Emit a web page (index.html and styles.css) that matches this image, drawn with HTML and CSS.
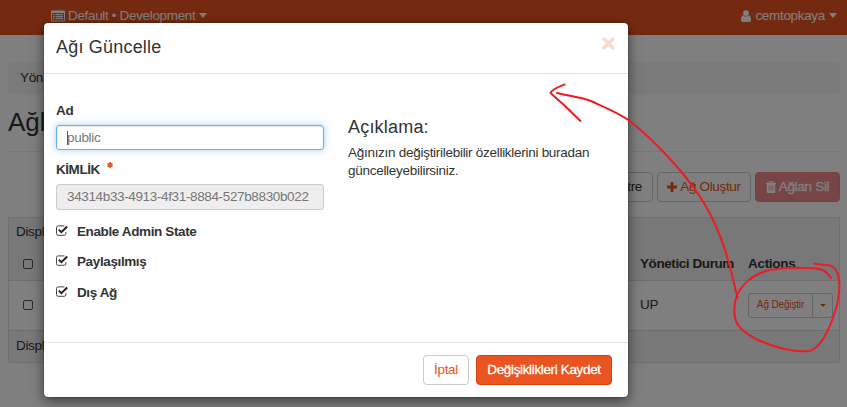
FILE: index.html
```html
<!DOCTYPE html>
<html lang="tr">
<head>
<meta charset="utf-8">
<title>Ağlar</title>
<link rel="stylesheet" href="styles.css">
</head>
<body>
<nav class="navbar">
  <div class="nav-item">
    <svg class="list-icon" width="14" height="12" viewBox="0 0 14 12"><path fill="currentColor" fill-rule="evenodd" d="M1 .5h12a1 1 0 0 1 1 1v9a1 1 0 0 1-1 1H1a1 1 0 0 1-1-1v-9a1 1 0 0 1 1-1zM1 3v7.500h12V3zM2 4h1.500v1.200H2zm2.500 0H12v1.200H4.500zM2 6h1.500v1.200H2zm2.500 0H12v1.200H4.500zM2 8h1.500v1.200H2zm2.500 0H12v1.200H4.500z"/></svg>
    <span class="project">Default • Development</span><i class="caret"></i>
  </div>
  <div class="nav-item">
    <svg class="user-icon" width="10" height="12" viewBox="0 0 10 12"><circle cx="5" cy="3.100" r="2.900" fill="currentColor"/><path fill="currentColor" d="M2.200 5.300C.6 5.800 0 7.500 0 9.700 0 11 .8 12 2 12h6c1.200 0 2-1 2-2.300 0-2.200-.6-3.900-2.200-4.400a3.800 3.800 0 0 1-5.600 0z"/></svg>
    <span class="username">cemtopkaya</span><i class="caret"></i>
  </div>
</nav>
<main class="page">
  <div class="breadcrumb">Yön</div>
  <h1>Ağl</h1>
  <div class="toolbar">
    <button class="btn filter">Filtre</button>
    <button class="btn create"><svg width="10" height="10" viewBox="0 0 10 10"><path fill="currentColor" d="M3.600 0h2.800v3.600H10v2.800H6.400V10H3.600V6.400H0V3.600h3.600z"/></svg><span>Ağ Oluştur</span></button>
    <button class="btn delete"><svg width="10" height="12" viewBox="0 0 10 12"><path fill="none" stroke="currentColor" d="M3.300 2V.6h3.400V2"/><path fill="currentColor" fill-rule="evenodd" d="M0 1.700h10v1.300H9.200v7.800Q9.200 12 8.200 12H1.800Q.8 12 .8 10.800V3H0zM2.800 4.500v5.200h.6V4.500zm1.900 0v5.200h.6V4.500zm1.900 0v5.200h.6V4.500z"/></svg><span>Ağları Sil</span></button>
  </div>
  <section class="table">
    <div class="caption">Displ</div>
    <div class="row head"><i class="box"></i><span class="col-state">Yönetici Durum</span><span class="col-actions">Actions</span></div>
    <div class="row data"><i class="box"></i><span class="state">UP</span><div class="split"><span class="edit">Ağ Değiştir</span><span class="toggle"><i class="caret small"></i></span></div></div>
    <div class="foot">Displ</div>
  </section>
</main>
<div class="backdrop"></div>
<div class="modal">
  <header><h2>Ağı Güncelle</h2><svg class="close" width="13" height="13" viewBox="0 0 13 13"><path d="M2.200 2.200l8.600 8.600M10.800 2.200l-8.600 8.600" stroke="currentColor" stroke-width="3.600" stroke-linecap="round"/></svg></header>
  <div class="content">
    <form class="form">
      <label class="label">Ad</label>
      <div class="input focused"><i class="cursor"></i><span class="value-name">public</span></div>
      <label class="label id-label"><span>KİMLİK</span><svg width="6" height="6" viewBox="0 0 6 6"><path d="M3 0v6M.4 1.500l5.200 3M5.600 1.500l-5.200 3" stroke="#e95420" stroke-width="1.500"/></svg></label>
      <div class="input disabled"><span class="value-id">34314b33-4913-4f31-8884-527b8830b022</span></div>
      <label class="check"><svg width="12" height="11" viewBox="0 0 12 11"><path fill="none" stroke="#444" d="M8.500.9H2.200Q.5.900.5 2.600v6Q.5 10.300 2.200 10.300h6Q9.900 10.300 9.900 8.600V7"/><path fill="none" stroke="#222" stroke-width="2" d="M2.800 4.600l2.600 2.600L11.200 1.500"/></svg><span>Enable Admin State</span></label>
      <label class="check"><svg width="12" height="11" viewBox="0 0 12 11"><path fill="none" stroke="#444" d="M8.500.9H2.200Q.5.900.5 2.600v6Q.5 10.300 2.200 10.300h6Q9.900 10.300 9.900 8.600V7"/><path fill="none" stroke="#222" stroke-width="2" d="M2.800 4.600l2.600 2.600L11.200 1.500"/></svg><span>Paylaşılmış</span></label>
      <label class="check"><svg width="12" height="11" viewBox="0 0 12 11"><path fill="none" stroke="#444" d="M8.500.9H2.200Q.5.900.5 2.600v6Q.5 10.300 2.200 10.300h6Q9.900 10.300 9.900 8.600V7"/><path fill="none" stroke="#222" stroke-width="2" d="M2.800 4.600l2.600 2.600L11.200 1.500"/></svg><span>Dış Ağ</span></label>
    </form>
    <div class="help"><h3>Açıklama:</h3><p><span>Ağınızın değiştirilebilir özelliklerini buradan</span><br><span>güncelleyebilirsiniz.</span></p></div>
  </div>
  <footer><button class="btn cancel">İptal</button><button class="btn save">Değişiklikleri Kaydet</button></footer>
</div>
<svg class="annotation" width="847" height="407" viewBox="0 0 847 407">
  <path d="M564.500 84.500C559 86.500 552 89 550.500 93L565 106L580.500 121"/>
  <path d="M557 93C568 96 581 97 592 101.500C604 107 619 113 630 121C663 148 690 180 704 203C723 235 730 265 737.500 298"/>
  <path d="M831 278C825 268 817 268 806 268C790 267 775 269 769 270C752 275 738 286 735 302C732 322 738 330 758 340C774 347 792 353 810 351C822 347 831 325 836 309C840 293 841 279 836 270C831 263 824 266 814 263.500"/>
</svg>
</body>
</html>
```
FILE: styles.css
```css
* { box-sizing: border-box; }
body {
  margin: 0;
  height: 407px;
  overflow: hidden;
  position: relative;
  background: #fff;
  color: #333;
  font: 13.5px/18px "Liberation Sans", Arial, sans-serif;
  letter-spacing: -.32px;
}
span { white-space: nowrap; }
h1, h2, h3, p { margin: 0; font-weight: 400; }
.navbar {
  height: 35px;
  padding: 0 10px 4px 51px;
  display: flex;
  justify-content: space-between;
  align-items: center;
  background: #e95420;
  color: #fff;
}
.nav-item { display: flex; align-items: center; }
.list-icon { margin-right: 3px; }
.project { letter-spacing: -.34px; }
.user-icon { margin-right: 4px; }
.caret {
  margin-left: 4px;
  border: 4px solid transparent;
  border-top: 5px solid currentColor;
  border-bottom: 0;
}
.caret.small { margin: 0; border-width: 3px 3px 0; }
.page { padding: 27px 7px 0 8px; }
.breadcrumb {
  height: 32px;
  padding: 7px 12px;
  border-radius: 4px;
  background: #f5f5f5;
}
h1 {
  height: 58px;
  padding-top: 13px;
  border-bottom: 1px solid #eee;
  font-size: 26px;
  line-height: 30px;
  letter-spacing: 0;
}
.toolbar {
  display: flex;
  justify-content: flex-end;
  gap: 4px;
  margin: 20px 0 15px;
}
.btn {
  height: 30px;
  padding: 0;
  display: flex;
  align-items: center;
  justify-content: center;
  gap: 3px;
  border: 1px solid #ccc;
  border-radius: 4px;
  background: #fff;
  color: #e95420;
  font: 13.5px/18px "Liberation Sans", Arial, sans-serif;
  letter-spacing: -.35px;
  white-space: nowrap;
}
.filter { width: 56px; padding-right: 10px; justify-content: flex-end; color: #333; }
.create { width: 94px; }
.delete { width: 85px; background: #ee8a8a; border-color: #ee8080; color: #fff; -webkit-text-stroke: .3px; }
.table { border: 1px solid #ddd; background: #fff; }
.caption { height: 30px; padding: 5px 7px; background: #f1f1f1; }
.row {
  display: grid;
  grid-template-columns: 617px 108px 1fr;
  align-items: center;
  padding-left: 14px;
  border-bottom: 1px solid #ddd;
}
.head { height: 33px; padding-bottom: 1px; background: #f1f1f1; font-weight: 700; letter-spacing: -.42px; }
.col-actions { letter-spacing: -.3px; }
.data { height: 50px; }
.state { padding-bottom: 1px; }
.box { width: 10px; height: 10px; border: 1px solid #555; border-radius: 2px; }
.data .box { margin-top: -1px; }
.foot { height: 31px; padding: 6px 7px; background: #f1f1f1; }
.split {
  width: 85px;
  height: 25px;
  display: flex;
  border: 1px solid #ccc;
  border-radius: 3px;
  color: #e95420;
  font-size: 10px;
  letter-spacing: -.15px;
}
.edit { width: 64px; border-right: 1px solid #ccc; text-align: center; line-height: 22px; }
.toggle { flex: 1; display: flex; align-items: center; justify-content: center; }
.backdrop { position: absolute; inset: 0; background: rgba(0, 0, 0, .5); }
.modal {
  position: absolute;
  left: 44px;
  top: 23px;
  width: 584px;
  height: 374px;
  display: flex;
  flex-direction: column;
  border-radius: 4px;
  background: #fff;
  box-shadow: 0 4px 13px rgba(0, 0, 0, .55), 0 0 1px #000;
}
.modal header {
  height: 51px;
  padding: 14px 13px 0 12px;
  display: flex;
  justify-content: space-between;
  border-bottom: 1px solid #e2e2e2;
}
h2, h3 { font-size: 18px; line-height: 21px; letter-spacing: .2px; }
.close { color: #fbd9cc; }
.content { flex: 1; display: flex; padding: 0 12px; gap: 24px; }
.form { width: 268px; padding-top: 28px; }
.label { height: 23px; display: flex; font-weight: 700; }
.id-label { height: 23px; margin-top: 11px; letter-spacing: -.45px; }
.id-label svg { margin: 1px 0 0 7px; }
.input {
  height: 26px;
  padding: 0 10px;
  display: flex;
  align-items: center;
  border: 1px solid #ccc;
  border-radius: 3px;
  color: #777;
}
.value-id { letter-spacing: -.36px; }
.focused { height: 25px; border-color: #66afe9; box-shadow: inset 0 1px 1px rgba(0, 0, 0, .075), 0 0 7px rgba(102, 175, 233, .6); }
.cursor { width: 1px; height: 14px; margin-right: -1px; background: #555; }
.disabled { background: #eee; }
.check { height: 18px; display: flex; margin-top: 12.500px; font-weight: 700; letter-spacing: -.38px; }
.check svg { margin: 2px 9px 0 0; }
.help { padding-top: 43px; letter-spacing: -.28px; }
h3 { margin-bottom: 6px; }
.modal footer {
  height: 55px;
  padding: 12px 16px;
  display: flex;
  justify-content: flex-end;
  gap: 7px;
  border-top: 1px solid #e2e2e2;
}
.cancel { width: 46px; }
.save { width: 136px; border-color: #d64412; background: #e95420; color: #fff; -webkit-text-stroke: .3px; }
.annotation {
  position: absolute;
  inset: 0;
  fill: none;
  stroke: #ed1c24;
  stroke-width: 2;
  stroke-linecap: round;
  stroke-linejoin: round;
}
```
